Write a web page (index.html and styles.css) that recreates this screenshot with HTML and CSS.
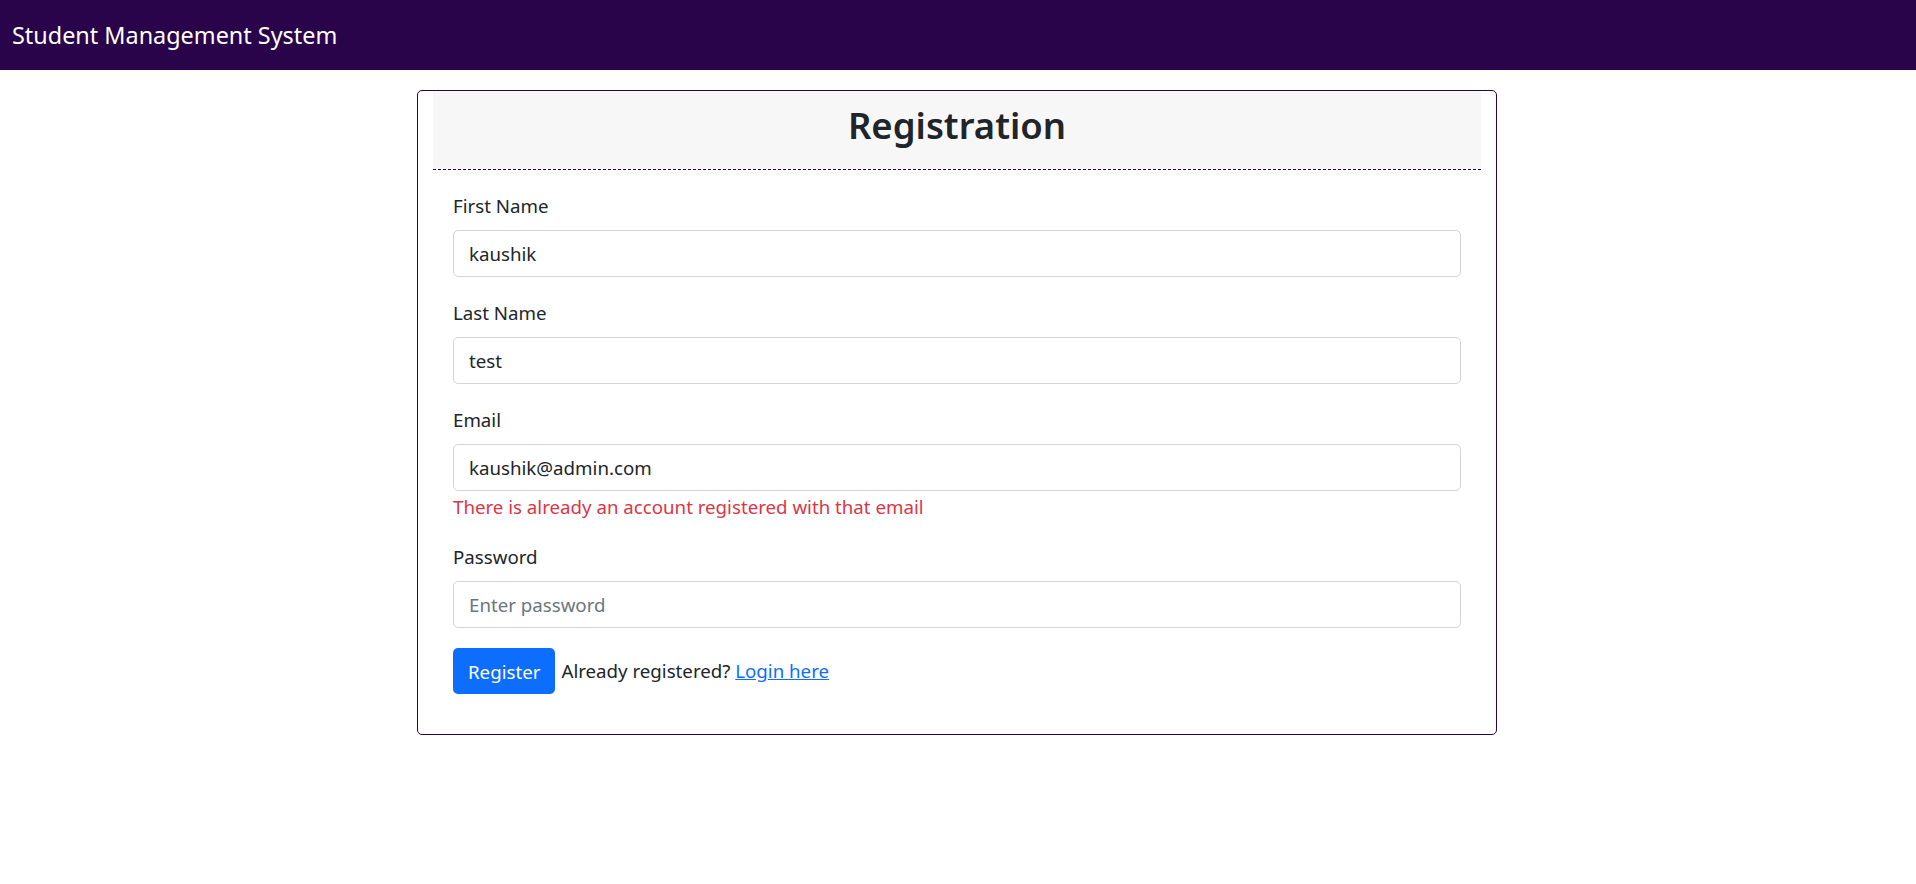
FILE: index.html
```html
<!DOCTYPE html>
<html lang="en">
<head>
<meta charset="utf-8">
<title>Registration</title>
<link rel="stylesheet" href="styles.css">
</head>
<body>
<nav class="navbar">
  <a class="brand" href="#">Student Management System</a>
</nav>
<main class="container">
  <div class="card">
    <div class="card-header">
      <h2 class="title">Registration</h2>
    </div>
    <form class="card-body">
      <div class="field">
        <label class="label" for="fn">First Name</label>
        <input class="control" id="fn" type="text" value="kaushik">
      </div>
      <div class="field">
        <label class="label" for="ln">Last Name</label>
        <input class="control" id="ln" type="text" value="test">
      </div>
      <div class="field">
        <label class="label" for="em">Email</label>
        <input class="control" id="em" type="email" value="kaushik@admin.com">
        <div class="error">There is already an account registered with that email</div>
      </div>
      <div class="field">
        <label class="label" for="pw">Password</label>
        <input class="control" id="pw" type="password" placeholder="Enter password">
      </div>
      <div class="actions">
        <button class="btn" type="button">Register</button>
        <span class="note">Already registered? <a class="link" href="#">Login here</a></span>
      </div>
    </form>
  </div>
</main>
</body>
</html>
```
FILE: styles.css
```css
* { box-sizing: border-box; }

body {
  margin: 0;
  background: #fff;
  color: #212529;
  font-family: "Noto Sans", "Open Sans", sans-serif;
  font-size: 18.7px;
  line-height: 30px;
}

.navbar {
  height: 70px;
  background: #2a044a;
  display: flex;
  align-items: center;
  padding: 0 12px;
}

.brand {
  color: #fff;
  text-decoration: none;
  font-size: 23.4px;
  line-height: 37.5px;
  padding-top: 1px;
}

.container {
  width: 1082px;
  margin: 20px auto 0;
  padding-right: 2px;
}

.card {
  border: 1px solid #2a044a;
  border-radius: 5px;
  padding: 0 15px;
}

.card-header {
  background: #f7f7f7;
  padding: 10px;
  border-bottom: 1px dashed #2a044a;
  text-align: center;
}

.title {
  margin: 0 0 10px;
  font-size: 36.5px;
  line-height: 48px;
  font-weight: 600;
  color: #212529;
}

.card-body {
  padding: 20px 20px 20px;
}

.field {
  margin-bottom: 20px;
}

.label {
  display: block;
  margin-bottom: 10px;
  padding-top: 1px;
  height: 30px;
}

.control {
  display: block;
  width: 100%;
  height: 47px;
  padding: 0 15px;
  border: 1px solid #d2d5da;
  border-radius: 5px;
  font-family: inherit;
  font-size: 18.7px;
  color: #212529;
  background: #fff;
}

.control::placeholder {
  color: #6c757d;
}

.error {
  color: #dc3545;
  padding-top: 1px;
  height: 30px;
}

.actions {
  display: flex;
  align-items: center;
  gap: 6px;
  margin-bottom: 20px;
}

.btn {
  height: 46px;
  padding: 0 15px;
  border: none;
  border-radius: 5px;
  background: #0d6efd;
  color: #fff;
  font-family: inherit;
  font-size: 18.7px;
}

.link {
  color: #0d6efd;
  text-decoration: underline;
}
```
